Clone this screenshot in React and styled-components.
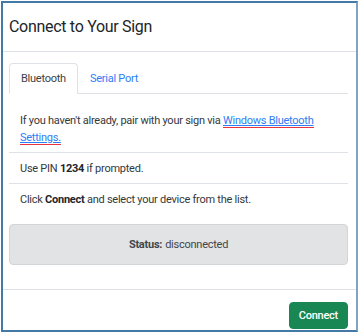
import React from "react";
import styled, { createGlobalStyle } from "styled-components";

const GlobalStyle = createGlobalStyle`
  html, body {
    margin: 0;
    padding: 0;
    background: #fff;
  }
  body {
    padding: 1px 0 0 1px;
    font-family: Roboto, "Noto Sans", Arial, sans-serif;
    color: #212529;
  }
`;

const Frame = styled.div`
  box-sizing: border-box;
  width: 357px;
  height: 331px;
  border: 2px solid #4379a7;
  border-right-color: #7fa3c0;
  box-shadow: 0 2px 0 #d7e3ed;
  background: #fff;
  overflow: hidden;
  display: flex;
  flex-direction: column;
`;

const Header = styled.div`
  box-sizing: border-box;
  height: 49px;
  padding: 0 6px;
  display: flex;
  align-items: center;
  border-bottom: 1px solid #dee2e6;
`;

const Title = styled.h5`
  margin: 0;
  font-size: 16px;
  font-weight: 400;
  letter-spacing: -0.3px;
  line-height: 20px;
  color: #212529;
`;

const Body = styled.div`
  padding: 11px 8px 24px 6px;
  border-bottom: 1px solid #dee2e6;
`;

const Tabs = styled.div`
  display: flex;
  border-bottom: 1px solid #dee2e6;
`;

const Tab = styled.div`
  box-sizing: border-box;
  height: 31px;
  margin-bottom: -1px;
  padding: 0 11px;
  display: flex;
  align-items: center;
  font-size: 11px;
  letter-spacing: -0.25px;
  border: 1px solid transparent;
  border-radius: 4px 4px 0 0;
  color: ${(p) => (p.$active ? "#3a3f44" : "#2f7cf6")};
  background: ${(p) => (p.$active ? "#fff" : "transparent")};
  border-color: ${(p) =>
    p.$active ? "#dee2e6 #dee2e6 #fff" : "transparent"};
`;

const List = styled.ul`
  list-style: none;
  margin: 11px 0 0;
  padding: 0;
`;

const Item = styled.li`
  padding: 6.5px 11px;
  font-size: 11px;
  letter-spacing: -0.25px;
  line-height: 17px;
  color: #33383d;
  border-bottom: 1px solid #dee2e6;

  &:last-child {
    border-bottom: none;
  }

  b {
    font-weight: 700;
    color: #212529;
  }
`;

const BtLink = styled.a`
  color: #2f7cf6;
  text-decoration: underline;
  text-decoration-thickness: 1px;
  text-underline-offset: 1px;
  border-bottom: 1.5px solid #e8343f;
`;

const Status = styled.div`
  box-sizing: border-box;
  height: 41px;
  margin-top: 10px;
  display: flex;
  align-items: center;
  justify-content: center;
  font-size: 11px;
  letter-spacing: -0.25px;
  color: #41464b;
  background: #e2e3e5;
  border: 1px solid #d3d6d8;
  border-radius: 4px;

  b {
    font-weight: 700;
    margin-right: 3px;
  }
`;

const Footer = styled.div`
  display: flex;
  justify-content: flex-end;
  padding: 12px 8px 0 6px;
`;

const Button = styled.button`
  box-sizing: border-box;
  height: 27px;
  padding: 0 9px;
  font-family: Roboto, "Noto Sans", Arial, sans-serif;
  font-size: 11px;
  font-weight: 500;
  letter-spacing: -0.25px;
  color: #fff;
  background: #198754;
  border: 1px solid #198754;
  border-radius: 4px;
  cursor: pointer;
`;

function App() {
  const [tab, setTab] = React.useState("bt");

  return (
    <>
      <GlobalStyle />
      <Frame>
        <Header>
          <Title>Connect to Your Sign</Title>
        </Header>
        <Body>
          <Tabs>
            <Tab $active={tab === "bt"} onClick={() => setTab("bt")}>
              Bluetooth
            </Tab>
            <Tab $active={tab === "serial"} onClick={() => setTab("serial")}>
              Serial Port
            </Tab>
          </Tabs>
          <List>
            <Item>
              If you haven't already, pair with your sign via{" "}
              <BtLink href="#">Windows Bluetooth Settings.</BtLink>
            </Item>
            <Item>
              Use PIN <b>1234</b> if prompted.
            </Item>
            <Item>
              Click <b>Connect</b> and select your device from the list.
            </Item>
          </List>
          <Status>
            <b>Status:</b> disconnected
          </Status>
        </Body>
        <Footer>
          <Button>Connect</Button>
        </Footer>
      </Frame>
    </>
  );
}

export default App;
